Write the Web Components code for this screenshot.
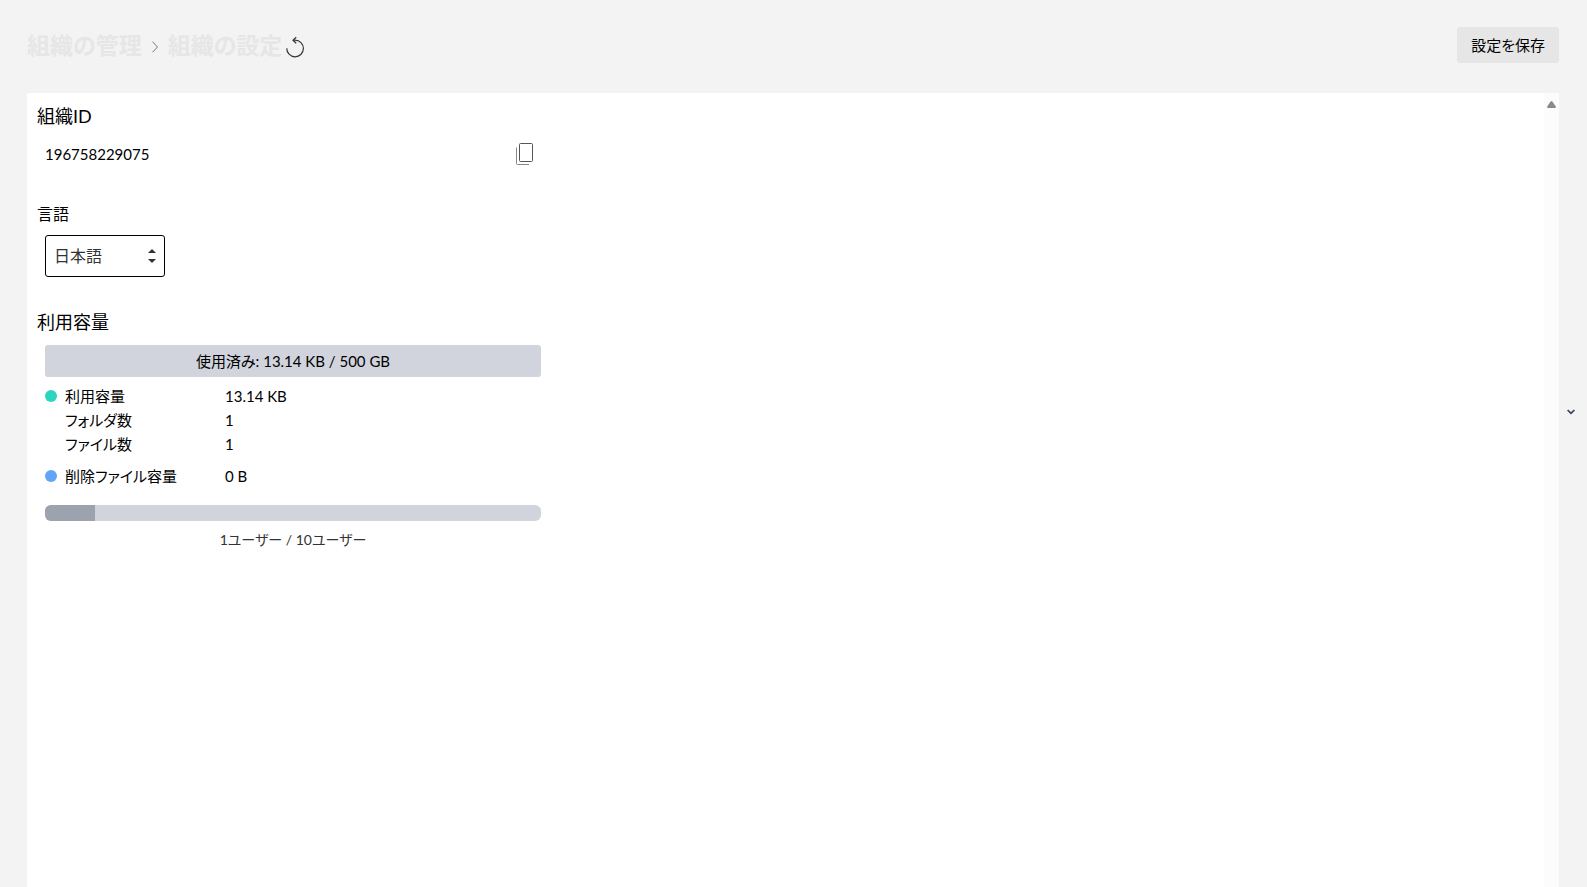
<!DOCTYPE html>
<html lang="ja">
<head>
<meta charset="UTF-8">
<meta name="viewport" content="width=device-width, initial-scale=1">
<title>組織の設定</title>
<style>
  html, body { height: 100%; }
  body {
    margin: 0;
    background: #f3f3f3;
    color: #000;
    font-family: Lato, "Noto Sans CJK JP", sans-serif;
    font-size: 15px;
    line-height: 24px;
    font-feature-settings: "palt";
    overflow: hidden;
  }
</style>
</head>
<body>
<settings-page>
  <page-header slot="header" padre="組織の管理" actual="組織の設定">
    <save-button>設定を保存</save-button>
  </page-header>

  <settings-section titulo="組織ID" grande>
    <copy-field valor="196758229075"></copy-field>
  </settings-section>

  <settings-section titulo="言語">
    <language-select etiqueta="言語" opciones="日本語,English"></language-select>
  </settings-section>

  <settings-section titulo="利用容量" grande>
    <storage-usage texto="使用済み: 13.14 KB / 500 GB">
      <usage-row color="#2dd4bf" nombre="利用容量" valor="13.14 KB"></usage-row>
      <usage-row nombre="フォルダ数" valor="1"></usage-row>
      <usage-row nombre="ファイル数" valor="1"></usage-row>
      <usage-row color="#60a5fa" nombre="削除ファイル容量" valor="0 B" separado></usage-row>
    </storage-usage>
    <user-meter usados="1" total="10"></user-meter>
  </settings-section>
</settings-page>

<script>
// Crea el shadow root con el marcado indicado
function montar(el, html) {
  el.attachShadow({ mode: "open" }).innerHTML = html;
}

/* Página: cabecera, panel blanco con barra de desplazamiento y pestaña lateral */
class SettingsPage extends HTMLElement {
  connectedCallback() {
    montar(this, `
      <style>
        :host {
          display: flex;
          flex-direction: column;
          box-sizing: border-box;
          height: 100%;
          padding: 27px 28px 0 27px;
        }
        .panel {
          flex: 1;
          min-height: 0;
          display: flex;
          background: #fff;
          border-radius: 3px 0 0 0;
        }
        main {
          flex: 1;
          min-width: 0;
          display: flex;
          flex-direction: column;
          gap: 32px;
          padding: 10px;
        }
        .scroll {
          width: 15px;
          background: #fcfcfc;
          text-align: center;
        }
        .scroll svg { display: block; margin: 8px auto 0; }
        .lateral {
          position: fixed;
          right: 4px;
          top: 400px;
          display: grid;
          place-items: center;
          width: 24px;
          height: 24px;
          padding: 0;
          border: 0;
          background: none;
          cursor: pointer;
        }
      </style>
      <slot name="header"></slot>
      <div class="panel">
        <main><slot></slot></main>
        <div class="scroll" aria-hidden="true">
          <svg width="9" height="7" viewBox="0 0 9 7"><path d="M3.6.4Q4.5-.3 5.4.4L8.8 5.4Q9.2 7 8 7H1Q-.2 7 .2 5.4Z" fill="#8a8a8a"/></svg>
        </div>
      </div>
      <button class="lateral" type="button" aria-label="開く">
        <svg width="8" height="6" viewBox="0 0 8 6" fill="none" stroke="#334155" stroke-width="1.7"><path d="M.6 1 4 4.3 7.4 1"/></svg>
      </button>
    `);
  }
}
customElements.define("settings-page", SettingsPage);

/* Cabecera con la ruta y el botón de recargar */
class PageHeader extends HTMLElement {
  connectedCallback() {
    montar(this, `
      <style>
        :host {
          display: flex;
          justify-content: space-between;
          align-items: flex-start;
          padding-bottom: 30px;
        }
        nav { display: flex; align-items: center; height: 36px; }
        a, h1 {
          margin: 0;
          font-size: 23px;
          font-weight: 700;
          line-height: 36px;
          color: #e6e6e6;
          text-decoration: none;
        }
        .flecha { margin: 4px 9px 0; }
        button {
          display: grid;
          padding: 4px 0 0;
          margin-left: 3px;
          border: 0;
          background: none;
          cursor: pointer;
        }
      </style>
      <nav>
        <a href="#">${this.getAttribute("padre")}</a>
        <svg class="flecha" width="8" height="12" viewBox="0 0 8 12" fill="none" stroke="#777" stroke-width="1"><path d="M1.5.7 6.5 6 1.5 11.3"/></svg>
        <h1>${this.getAttribute("actual")}</h1>
        <button type="button" aria-label="再読み込み">
          <svg width="20" height="22" viewBox="0 0 20 22" fill="none" stroke="#333" stroke-width="1.2">
            <path d="M1.8 12.2A8.3 8.3 0 1 0 10.1 4.2H8.2"/>
            <path d="M11.2 1.2 8 4.2 11.2 7.2"/>
          </svg>
        </button>
      </nav>
      <slot></slot>
    `);
  }
}
customElements.define("page-header", PageHeader);

class SaveButton extends HTMLElement {
  connectedCallback() {
    montar(this, `
      <style>
        :host { display: block; }
        button {
          height: 36px;
          padding: 0 14px;
          border: 0;
          border-radius: 3px;
          background: #e6e6e6;
          color: #000;
          font: inherit;
          font-feature-settings: inherit;
          cursor: pointer;
        }
        button:hover { background: #ddd; }
      </style>
      <button type="button"><slot></slot></button>
    `);
  }
}
customElements.define("save-button", SaveButton);

/* Sección con título; "grande" usa el tamaño mayor */
class SettingsSection extends HTMLElement {
  connectedCallback() {
    montar(this, `
      <style>
        :host { display: block; max-width: 504px; }
        h2 {
          margin: 0 0 8px;
          font-size: 16px;
          font-weight: 400;
          line-height: 26px;
        }
        :host([grande]) h2 { margin-bottom: 10px; font-size: 18px; }
        .cuerpo { padding-left: 8px; }
      </style>
      <h2>${this.getAttribute("titulo")}</h2>
      <div class="cuerpo"><slot></slot></div>
    `);
  }
}
customElements.define("settings-section", SettingsSection);

class CopyField extends HTMLElement {
  connectedCallback() {
    montar(this, `
      <style>
        :host {
          display: flex;
          align-items: center;
          justify-content: space-between;
          height: 30px;
          padding-right: 6px;
        }
        button {
          display: grid;
          padding: 0;
          border: 0;
          background: none;
          cursor: pointer;
        }
      </style>
      <span>${this.getAttribute("valor")}</span>
      <button type="button" aria-label="コピー">
        <svg width="20" height="24" viewBox="0 0 20 24" fill="none" stroke="#555">
          <rect x="4.5" y="1.5" width="13" height="18" rx="1"/>
          <path d="M1.5 5.5V21.5Q1.5 22.5 2.5 22.5H14" stroke="#888"/>
        </svg>
      </button>
    `);
    this.shadowRoot.querySelector("button").addEventListener("click", () => {
      if (navigator.clipboard) navigator.clipboard.writeText(this.getAttribute("valor"));
    });
  }
}
customElements.define("copy-field", CopyField);

class LanguageSelect extends HTMLElement {
  connectedCallback() {
    const opciones = this.getAttribute("opciones").split(",");
    montar(this, `
      <style>
        :host { display: block; font-size: 16px; }
        .caja { display: grid; width: 120px; align-items: center; }
        select, svg { grid-area: 1 / 1; }
        select {
          appearance: none;
          width: 100%;
          height: 42px;
          padding: 0 24px 0 8px;
          border: 1px solid #000;
          border-radius: 3px;
          background: #fff;
          color: #333;
          font: inherit;
          font-feature-settings: inherit;
        }
        svg { justify-self: end; margin-right: 9px; pointer-events: none; }
      </style>
      <div class="caja">
        <select aria-label="${this.getAttribute("etiqueta")}">
          ${opciones.map((o) => `<option>${o}</option>`).join("")}
        </select>
        <svg width="8" height="14" viewBox="0 0 8 14" fill="#333"><path d="M0 4 4 0 8 4ZM0 10H8L4 14Z"/></svg>
      </div>
    `);
  }
}
customElements.define("language-select", LanguageSelect);

/* Barra de capacidad con su texto y la lista de detalle */
class StorageUsage extends HTMLElement {
  connectedCallback() {
    montar(this, `
      <style>
        :host { display: block; }
        .barra {
          margin-bottom: 7px;
          border-radius: 3px;
          background: #d1d4dc;
          line-height: 32px;
          text-align: center;
        }
      </style>
      <div class="barra">${this.getAttribute("texto")}</div>
      <slot></slot>
    `);
  }
}
customElements.define("storage-usage", StorageUsage);

class UsageRow extends HTMLElement {
  connectedCallback() {
    montar(this, `
      <style>
        :host {
          display: grid;
          grid-template-columns: 12px 152px 1fr;
          column-gap: 8px;
          align-items: center;
        }
        :host([separado]) { margin-top: 8px; }
        .punto {
          width: 12px;
          height: 12px;
          border-radius: 50%;
          background: ${this.getAttribute("color") || "transparent"};
        }
      </style>
      <span class="punto"></span>
      <span>${this.getAttribute("nombre")}</span>
      <span>${this.getAttribute("valor")}</span>
    `);
  }
}
customElements.define("usage-row", UsageRow);

class UserMeter extends HTMLElement {
  connectedCallback() {
    const usados = Number(this.getAttribute("usados"));
    const total = Number(this.getAttribute("total"));
    montar(this, `
      <style>
        :host {
          display: block;
          padding-top: 17px;
          color: #333;
          font-size: 14px;
          text-align: center;
        }
        .pista {
          height: 16px;
          margin-bottom: 7px;
          border-radius: 6px;
          background: #d1d4dc;
          overflow: hidden;
        }
        .lleno { width: ${(usados / total) * 100}%; height: 100%; background: #9ca3af; }
      </style>
      <div class="pista" role="progressbar" aria-label="ユーザー" aria-valuenow="${usados}" aria-valuemax="${total}">
        <div class="lleno"></div>
      </div>
      <div>${usados}ユーザー / ${total}ユーザー</div>
    `);
  }
}
customElements.define("user-meter", UserMeter);
</script>
</body>
</html>
